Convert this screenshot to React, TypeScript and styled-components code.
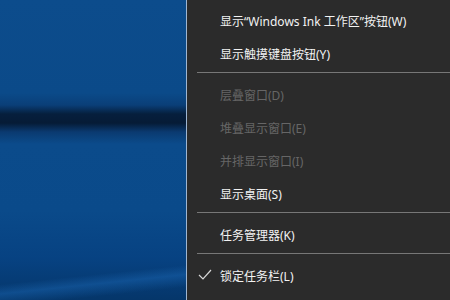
import React from 'react';
import styled, { createGlobalStyle } from 'styled-components';

const GlobalStyle = createGlobalStyle`
	html, body {
		margin: 0;
		padding: 0;
		background: #2b2b2b;
	}
	#root {
		width: 450px;
		height: 300px;
		overflow: hidden;
	}
`;

const Screen = styled.div`
	display: flex;
	width: 450px;
	height: 300px;
	font-family: 'Noto Sans', 'Noto Sans CJK SC', sans-serif;
`;

const Desktop = styled.div`
	width: 186px;
	flex-shrink: 0;
	background:
		linear-gradient(174deg, transparent 0%, transparent 89%, rgba(30, 110, 190, 0.4) 92%, transparent 96%),
		linear-gradient(
			180deg,
			#0c4c8c 0%,
			#0b4a89 31%,
			#0a3f78 35%,
			#061f3d 38%,
			#061b36 41%,
			#0a3a70 44%,
			#0b4b8b 48%,
			#0a4a8a 70%,
			#074282 86%,
			#05366a 100%
		);
`;

const Menu = styled.div`
	flex: 1;
	display: flex;
	flex-direction: column;
	padding-top: 4px;
	background: #2b2b2b;
	border-left: 1px solid #9fb6d2;
`;

const Item = styled.div<{ disabled?: boolean }>`
	position: relative;
	display: flex;
	align-items: center;
	flex-shrink: 0;
	height: 33px;
	padding-left: 33px;
	font-size: 12px;
	white-space: nowrap;
	color: ${(p) => (p.disabled ? '#666666' : '#f2f2f2')};
`;

const Separator = styled.div`
	flex-shrink: 0;
	height: 1px;
	margin: 2px 0 5px 10px;
	background: #777777;
`;

const Check = styled.svg`
	position: absolute;
	left: 11px;
	top: 10px;
`;

const CheckMark = () => (
	<Check width="14" height="12" viewBox="0 0 14 12">
		<polyline points="1,6 5,10 13,1" fill="none" stroke="#d8d8d8" strokeWidth="1.2" />
	</Check>
);

const App: React.FC = () => {
	return (
		<>
			<GlobalStyle />
			<Screen>
				<Desktop />
				<Menu>
					<Item>显示“Windows Ink 工作区”按钮(W)</Item>
					<Item>显示触摸键盘按钮(Y)</Item>
					<Separator />
					<Item disabled>层叠窗口(D)</Item>
					<Item disabled>堆叠显示窗口(E)</Item>
					<Item disabled>并排显示窗口(I)</Item>
					<Item>显示桌面(S)</Item>
					<Separator />
					<Item>任务管理器(K)</Item>
					<Separator />
					<Item>
						<CheckMark />
						锁定任务栏(L)
					</Item>
				</Menu>
			</Screen>
		</>
	);
};

export default App;
